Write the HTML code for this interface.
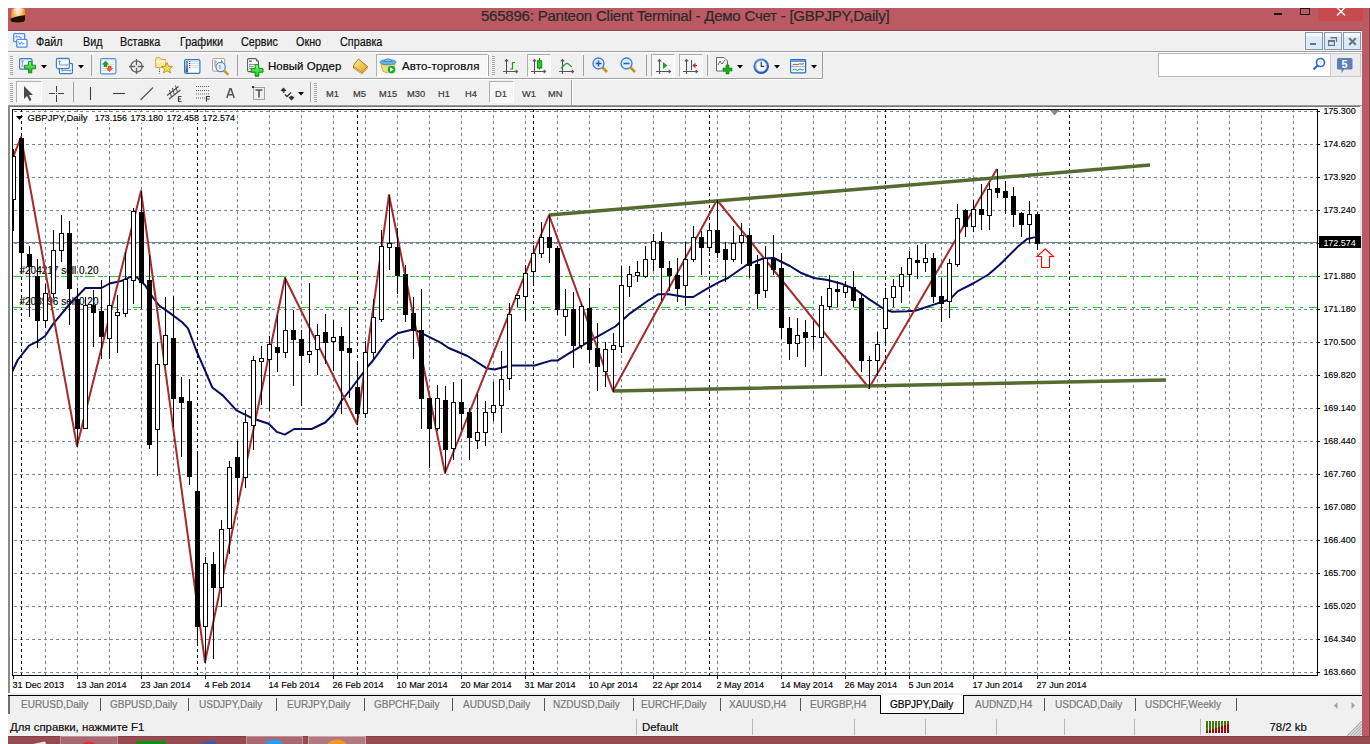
<!DOCTYPE html>
<html><head><meta charset="utf-8"><title>MT4</title>
<style>
html,body{margin:0;padding:0;width:1370px;height:744px;overflow:hidden;background:#fff;}
.a{position:absolute;}
.t{font-family:"Liberation Sans", sans-serif;white-space:nowrap;line-height:1;-webkit-text-stroke:0.2px currentColor;}
svg text{font-family:"Liberation Sans", sans-serif;}
</style></head><body>
<div class="a" style="left:8px;top:8px;width:1362px;height:22px;background:#bb5a63;"></div><div class="a" style="left:8px;top:30px;width:1354px;height:1px;background:#9c424c;"></div><div class="a" style="left:1362px;top:8px;width:8px;height:736px;background:#bb5a63;"></div><div class="a" style="left:1369px;top:8px;width:1px;height:736px;background:#8e3e48;"></div><div class="a" style="left:8px;top:736px;width:1362px;height:8px;background:#964a52;"></div><div class="a" style="left:8px;top:736px;width:1362px;height:1px;background:#8a4048;"></div><div class="a" style="left:1318px;top:8px;width:45px;height:13px;background:#c74a4e;"></div><svg class="a" style="left:10px;top:8px" width="17" height="16" viewBox="0 0 17 16">
<defs><linearGradient id="ai" x1="0" y1="0" x2="1" y2="0"><stop offset="0" stop-color="#f39020"/><stop offset="0.5" stop-color="#ffe0b8"/><stop offset="1" stop-color="#f39020"/></linearGradient><linearGradient id="ai2" x1="0" y1="0" x2="0" y2="1"><stop offset="0" stop-color="#fff" stop-opacity="0.85"/><stop offset="1" stop-color="#fff" stop-opacity="0"/></linearGradient></defs>
<path d="M1.5 3 Q1.5 0 5 0 L12 0 Q15 0 15 3 L15 11 Q15 15 8 15 Q1 15 1 12 Z" fill="url(#ai)"/>
<path d="M4 1 Q8.2 -0.5 12.5 1 L12 7 L4.5 8 Z" fill="url(#ai2)"/>
<path d="M5.5 1.5 L5.5 8 M8.2 1 L8.2 8 M11 1.5 L11 7.5" stroke="#f8b060" stroke-opacity="0.5" stroke-width="0.7"/>
<path d="M0.5 10.8 Q6 7.8 15 7.2 L15 11.5 Q15 14.8 8 14.8 Q0.5 14.8 0.5 12 Z" fill="#241005"/>
</svg><div class="a t" style="left:481px;top:8.3px;font-size:15px;color:#2a2a2a;letter-spacing:-0.22px;">565896: Panteon Client Terminal - Демо Счет - [GBPJPY,Daily]</div><div class="a" style="left:1274px;top:13px;width:8px;height:2px;background:#1a1a1a;"></div><div class="a" style="left:1300px;top:8px;width:8px;height:5px;border:1px solid #1a1a1a;border-top-width:1px"></div><svg class="a" style="left:1336px;top:7px" width="10" height="9"><path d="M1 0.5 L9 8.5 M9 0.5 L1 8.5" stroke="#fff" stroke-width="1.4"/></svg><div class="a" style="left:8px;top:31px;width:1354px;height:20px;background:#f0f0f0;"></div><div class="a" style="left:8px;top:31px;width:1354px;height:1px;background:#f5fafa;"></div><div class="a" style="left:8px;top:51px;width:1354px;height:1px;background:#a0a0a0;"></div><div class="a" style="left:8px;top:52px;width:1354px;height:1px;background:#ffffff;"></div><svg class="a" style="left:13px;top:33px" width="15" height="15" viewBox="0 0 15 15">
<rect x="0.7" y="0.7" width="11" height="8" rx="1" fill="#fff" stroke="#4a8af4" stroke-width="1.3"/>
<path d="M2.5 4.5 L3.5 3 L4.5 4.5 M5.5 3 L7 4.5 L8.5 5" stroke="#4a8af4" fill="none" stroke-width="1.1"/>
<rect x="3.7" y="6.3" width="10.3" height="7.9" rx="1" fill="#fff" stroke="#4a8af4" stroke-width="1.3"/>
<path d="M5.5 8.5 L7 11.5 L8.5 9 L9.8 11.5 L11.3 10" stroke="#4a8af4" fill="none" stroke-width="1"/>
</svg><div class="a t" style="left:36px;top:35.5px;font-size:12px;color:#111;transform:scaleX(0.9);transform-origin:0 0;">Файл</div><div class="a t" style="left:82.6px;top:35.5px;font-size:12px;color:#111;transform:scaleX(0.9);transform-origin:0 0;">Вид</div><div class="a t" style="left:120px;top:35.5px;font-size:12px;color:#111;transform:scaleX(0.9);transform-origin:0 0;">Вставка</div><div class="a t" style="left:180px;top:35.5px;font-size:12px;color:#111;transform:scaleX(0.9);transform-origin:0 0;">Графики</div><div class="a t" style="left:241.2px;top:35.5px;font-size:12px;color:#111;transform:scaleX(0.9);transform-origin:0 0;">Сервис</div><div class="a t" style="left:296px;top:35.5px;font-size:12px;color:#111;transform:scaleX(0.9);transform-origin:0 0;">Окно</div><div class="a t" style="left:339.8px;top:35.5px;font-size:12px;color:#111;transform:scaleX(0.9);transform-origin:0 0;">Справка</div><div class="a" style="left:1305px;top:32px;width:16px;height:16px;border:1px solid #8898a8;background:linear-gradient(#f2f8fe 0,#f2f8fe 3px,#dde9f6 4px,#dde9f6 100%)"></div><div class="a" style="left:1324px;top:32px;width:16px;height:16px;border:1px solid #8898a8;background:linear-gradient(#f2f8fe 0,#f2f8fe 3px,#dde9f6 4px,#dde9f6 100%)"></div><div class="a" style="left:1343px;top:32px;width:16px;height:16px;border:1px solid #8898a8;background:linear-gradient(#f2f8fe 0,#f2f8fe 3px,#dde9f6 4px,#dde9f6 100%)"></div><div class="a" style="left:1310px;top:43px;width:6px;height:2px;background:#667585"></div><svg class="a" style="left:1328px;top:37px" width="10" height="9"><path d="M2.5 0 L8.5 0 L8.5 5 M2.5 0.8 L8.5 0.8" stroke="#667585" stroke-width="1.2" fill="none"/><rect x="0.6" y="3.6" width="5.8" height="4.8" fill="#dde9f6" stroke="#667585" stroke-width="1.2"/><path d="M0.6 4.5 L6.4 4.5" stroke="#667585" stroke-width="1"/></svg><svg class="a" style="left:1348px;top:37px" width="9" height="9"><path d="M1.2 1.2 L7.8 7.8 M7.8 1.2 L1.2 7.8" stroke="#667585" stroke-width="2"/></svg><div class="a" style="left:8px;top:53px;width:1354px;height:52px;background:#f0f0f0;"></div><div class="a" style="left:8px;top:78px;width:815px;height:1px;background:#a0a0a0;"></div><div class="a" style="left:822px;top:52px;width:1px;height:26px;background:#a0a0a0;"></div><div class="a" style="left:8px;top:79px;width:815px;height:1px;background:#ffffff;"></div><div class="a" style="left:571px;top:80px;width:1px;height:25px;background:#a0a0a0;"></div><div class="a" style="left:572px;top:80px;width:1px;height:25px;background:#ffffff;"></div><div class="a" style="left:10px;top:56px;width:3px;height:1px;background:#a8a8a8;"></div><div class="a" style="left:10px;top:58px;width:3px;height:1px;background:#a8a8a8;"></div><div class="a" style="left:10px;top:60px;width:3px;height:1px;background:#a8a8a8;"></div><div class="a" style="left:10px;top:62px;width:3px;height:1px;background:#a8a8a8;"></div><div class="a" style="left:10px;top:64px;width:3px;height:1px;background:#a8a8a8;"></div><div class="a" style="left:10px;top:66px;width:3px;height:1px;background:#a8a8a8;"></div><div class="a" style="left:10px;top:68px;width:3px;height:1px;background:#a8a8a8;"></div><div class="a" style="left:10px;top:70px;width:3px;height:1px;background:#a8a8a8;"></div><div class="a" style="left:10px;top:72px;width:3px;height:1px;background:#a8a8a8;"></div><div class="a" style="left:10px;top:74px;width:3px;height:1px;background:#a8a8a8;"></div><div class="a" style="left:10px;top:83px;width:3px;height:1px;background:#a8a8a8;"></div><div class="a" style="left:10px;top:85px;width:3px;height:1px;background:#a8a8a8;"></div><div class="a" style="left:10px;top:87px;width:3px;height:1px;background:#a8a8a8;"></div><div class="a" style="left:10px;top:89px;width:3px;height:1px;background:#a8a8a8;"></div><div class="a" style="left:10px;top:91px;width:3px;height:1px;background:#a8a8a8;"></div><div class="a" style="left:10px;top:93px;width:3px;height:1px;background:#a8a8a8;"></div><div class="a" style="left:10px;top:95px;width:3px;height:1px;background:#a8a8a8;"></div><div class="a" style="left:10px;top:97px;width:3px;height:1px;background:#a8a8a8;"></div><div class="a" style="left:10px;top:99px;width:3px;height:1px;background:#a8a8a8;"></div><div class="a" style="left:10px;top:101px;width:3px;height:1px;background:#a8a8a8;"></div><div class="a" style="left:492px;top:56px;width:3px;height:1px;background:#a8a8a8;"></div><div class="a" style="left:492px;top:58px;width:3px;height:1px;background:#a8a8a8;"></div><div class="a" style="left:492px;top:60px;width:3px;height:1px;background:#a8a8a8;"></div><div class="a" style="left:492px;top:62px;width:3px;height:1px;background:#a8a8a8;"></div><div class="a" style="left:492px;top:64px;width:3px;height:1px;background:#a8a8a8;"></div><div class="a" style="left:492px;top:66px;width:3px;height:1px;background:#a8a8a8;"></div><div class="a" style="left:492px;top:68px;width:3px;height:1px;background:#a8a8a8;"></div><div class="a" style="left:492px;top:70px;width:3px;height:1px;background:#a8a8a8;"></div><div class="a" style="left:492px;top:72px;width:3px;height:1px;background:#a8a8a8;"></div><div class="a" style="left:492px;top:74px;width:3px;height:1px;background:#a8a8a8;"></div><div class="a" style="left:314px;top:83px;width:3px;height:1px;background:#a8a8a8;"></div><div class="a" style="left:314px;top:85px;width:3px;height:1px;background:#a8a8a8;"></div><div class="a" style="left:314px;top:87px;width:3px;height:1px;background:#a8a8a8;"></div><div class="a" style="left:314px;top:89px;width:3px;height:1px;background:#a8a8a8;"></div><div class="a" style="left:314px;top:91px;width:3px;height:1px;background:#a8a8a8;"></div><div class="a" style="left:314px;top:93px;width:3px;height:1px;background:#a8a8a8;"></div><div class="a" style="left:314px;top:95px;width:3px;height:1px;background:#a8a8a8;"></div><div class="a" style="left:314px;top:97px;width:3px;height:1px;background:#a8a8a8;"></div><div class="a" style="left:314px;top:99px;width:3px;height:1px;background:#a8a8a8;"></div><div class="a" style="left:314px;top:101px;width:3px;height:1px;background:#a8a8a8;"></div><div class="a" style="left:91px;top:55px;width:1px;height:21px;background:#a0a0a0;"></div><div class="a" style="left:237px;top:55px;width:1px;height:21px;background:#a0a0a0;"></div><div class="a" style="left:488px;top:55px;width:1px;height:21px;background:#a0a0a0;"></div><div class="a" style="left:583px;top:55px;width:1px;height:21px;background:#a0a0a0;"></div><div class="a" style="left:646px;top:55px;width:1px;height:21px;background:#a0a0a0;"></div><div class="a" style="left:707px;top:55px;width:1px;height:21px;background:#a0a0a0;"></div><div class="a" style="left:73px;top:82px;width:1px;height:20px;background:#a0a0a0;"></div><div class="a" style="left:310px;top:82px;width:1px;height:20px;background:#a0a0a0;"></div><svg class="a" style="left:41px;top:65px" width="6" height="4"><path d="M0 0 L6 0 L3 3.5 Z" fill="#000"/></svg><svg class="a" style="left:78px;top:65px" width="6" height="4"><path d="M0 0 L6 0 L3 3.5 Z" fill="#000"/></svg><svg class="a" style="left:737px;top:65px" width="6" height="4"><path d="M0 0 L6 0 L3 3.5 Z" fill="#000"/></svg><svg class="a" style="left:774px;top:65px" width="6" height="4"><path d="M0 0 L6 0 L3 3.5 Z" fill="#000"/></svg><svg class="a" style="left:811px;top:65px" width="6" height="4"><path d="M0 0 L6 0 L3 3.5 Z" fill="#000"/></svg><svg class="a" style="left:298px;top:92px" width="6" height="4"><path d="M0 0 L6 0 L3 3.5 Z" fill="#000"/></svg><div class="a" style="left:376px;top:54px;width:110px;height:21px;border:1px solid;border-color:#b0b0b0 #ffffff #ffffff #b0b0b0;background:#f7f7f7"></div><div class="a" style="left:527px;top:54px;width:22px;height:21px;border:1px solid;border-color:#b0b0b0 #ffffff #ffffff #b0b0b0;background:#f7f7f7"></div><div class="a" style="left:651px;top:54px;width:22px;height:21px;border:1px solid;border-color:#b0b0b0 #ffffff #ffffff #b0b0b0;background:#f7f7f7"></div><div class="a" style="left:679px;top:54px;width:22px;height:21px;border:1px solid;border-color:#b0b0b0 #ffffff #ffffff #b0b0b0;background:#f7f7f7"></div><div class="a" style="left:16px;top:81px;width:24px;height:20px;border:1px solid;border-color:#b0b0b0 #ffffff #ffffff #b0b0b0;background:#f7f7f7"></div><div class="a" style="left:489px;top:81px;width:23px;height:20px;border:1px solid;border-color:#b0b0b0 #ffffff #ffffff #b0b0b0;background:#f7f7f7"></div><svg class="a" style="left:18px;top:57px" width="19" height="17" viewBox="0 0 19 17"><defs><linearGradient id="wg" x1="0" y1="0" x2="0" y2="1"><stop offset="0" stop-color="#cfe2f8"/><stop offset="0.35" stop-color="#ffffff"/><stop offset="1" stop-color="#f2f6fb"/></linearGradient><linearGradient id="pg" x1="0" y1="0" x2="0" y2="1"><stop offset="0" stop-color="#8ef08e"/><stop offset="1" stop-color="#0cb40c"/></linearGradient></defs>
<rect x="1.6" y="1.6" width="12.4" height="10.6" rx="1.5" fill="url(#wg)" stroke="#3a7cc8" stroke-width="1.2"/>
<path d="M4.6 3.5 L4.6 10 M3.3 4.8 L4.6 3.5 L5.9 4.8 M3.3 8.7 L4.6 10 L5.9 8.7" stroke="#7f9fbd" fill="none" stroke-width="1"/>
<path d="M10.5 4.5 L13.8 4.5 L13.8 8.2 L17.6 8.2 L17.6 11.8 L13.8 11.8 L13.8 15.8 L10.5 15.8 L10.5 11.8 L6.6 11.8 L6.6 8.2 L10.5 8.2 Z" fill="url(#pg)" stroke="#0a8a0a" stroke-width="0.9"/></svg><svg class="a" style="left:55px;top:57px" width="19" height="18" viewBox="0 0 19 18"><rect x="4.4" y="6.3" width="13" height="10.4" rx="1.2" fill="#fafcff" stroke="#3a7cc8" stroke-width="1.2"/>
<path d="M6.5 13.5 L15.5 13.5 M7.5 12.3 L6.3 13.5 L7.5 14.7 M14.5 12.3 L15.7 13.5 L14.5 14.7" stroke="#7f9fbd" fill="none" stroke-width="1"/>
<rect x="1.4" y="1.4" width="13" height="10.2" rx="1.5" fill="url(#wg)" stroke="#3a7cc8" stroke-width="1.2"/>
<path d="M4.5 3.5 L4.5 8 M3.3 4.7 L4.5 3.5 L5.7 4.7 M4.5 8 L12.5 8 M11.3 6.8 L12.5 8 L11.3 9.2" stroke="#7f9fbd" fill="none" stroke-width="1"/></svg><svg class="a" style="left:100px;top:58px" width="17" height="17" viewBox="0 0 17 17"><rect x="0.6" y="0.6" width="15.3" height="15.3" rx="1.5" fill="#fff" stroke="#4a90dc" stroke-width="1.2"/><rect x="1.2" y="1.2" width="14.1" height="1.2" fill="#bcd8f4"/>
<path d="M3 8.5 L6 8.5 M3 10.5 L6 10.5 M3 12.5 L9 12.5 M10 4.5 L14 4.5 M10 6.5 L14 6.5 M12 12.5 L14 12.5" stroke="#d0d0d0" stroke-width="0.8"/>
<path d="M5.5 3 L8.6 6.3 L7 6.3 L7 8.8 L4 8.8 L4 6.3 L2.4 6.3 Z" fill="#1aa81a" stroke="#0a7a0a" stroke-width="0.5"/><path d="M9.6 13.8 L12.8 10.5 L11.2 10.5 L11.2 8 L8.1 8 L8.1 10.5 L6.4 10.5 Z" fill="#f06030" stroke="#c03a10" stroke-width="0.5"/></svg><svg class="a" style="left:129px;top:59px" width="15" height="15" viewBox="0 0 15 15"><circle cx="7.5" cy="7.5" r="5.6" fill="none" stroke="#606060" stroke-width="1.3"/><path d="M7.5 0 L7.5 6.3 M7.5 8.7 L7.5 15 M0 7.5 L6.3 7.5 M8.7 7.5 L15 7.5" stroke="#606060" stroke-width="1.3"/></svg><svg class="a" style="left:155px;top:57px" width="18" height="18" viewBox="0 0 18 18"><path d="M0.7 2 Q0.7 0.7 2 0.7 L5 0.7 L6.5 2.5 L10.5 2.5 L10.5 10.5 L0.7 10.5 Z" fill="#f8e7a0" stroke="#c8a038" stroke-width="0.9"/><path d="M1 4.5 L10.5 4.5" stroke="#fff8d8" stroke-width="2"/><path d="M4.5 11.5 L4.5 12.5 M4.5 14 L4.5 15 M4.5 16.5 L4.5 17" stroke="#333" stroke-width="0.9"/>
<path d="M12 5.5 L13.6 9.3 L17.6 9.5 L14.5 12 L15.6 16 L12 13.8 L8.4 16 L9.5 12 L6.4 9.5 L10.4 9.3 Z" fill="#f6dc50" stroke="#b8901e" stroke-width="0.9"/></svg><svg class="a" style="left:184px;top:59px" width="17" height="15" viewBox="0 0 17 15"><defs><linearGradient id="tg" x1="0" y1="0" x2="0" y2="1"><stop offset="0" stop-color="#9cc8f0"/><stop offset="1" stop-color="#3a4a5a"/></linearGradient></defs><rect x="0.6" y="0.6" width="15.3" height="13.8" rx="1.5" fill="#fff" stroke="#2f74c4" stroke-width="1.2"/><rect x="1.5" y="1.5" width="2.6" height="12" fill="url(#tg)"/><path d="M6 2.5 L15 2.5 M6 4.5 L15 4.5 M6 6.5 L15 6.5 M6 8.5 L15 8.5" stroke="#c8d8f4" stroke-width="0.9"/><path d="M5.2 2.5 L6.2 2.5 M5.2 8.5 L6.2 8.5" stroke="#e02020" stroke-width="1.2"/><path d="M5.2 4.5 L6.2 4.5 M5.2 6.5 L6.2 6.5" stroke="#203020" stroke-width="1.2"/><path d="M2.8 2.5 L2.8 3.3" stroke="#000" stroke-width="1.2"/></svg><svg class="a" style="left:212px;top:58px" width="18" height="18" viewBox="0 0 18 18"><rect x="0.6" y="0.6" width="12.2" height="12.6" rx="1" fill="#fafafa" stroke="#a89f8a" stroke-width="1"/><path d="M3 2 L3 9 M3 4 L5 4 M9.5 2 L9.5 7 M9.5 3 L11 4" stroke="#8a8a8a" stroke-width="0.9"/><circle cx="8.6" cy="9" r="4.6" fill="#e4f2fc" fill-opacity="0.9" stroke="#5a8ad8" stroke-width="1.2"/><path d="M8 7 L8 11" stroke="#9ab0c4" stroke-width="1.6"/><path d="M11.8 12.5 L16.3 16.8" stroke="#c8a020" stroke-width="2.6"/></svg><svg class="a" style="left:246px;top:57px" width="18" height="20" viewBox="0 0 18 20"><path d="M2.5 1.6 L9.6 1.6 L12.4 4.4 L12.4 13 Q12.4 14.6 11 14.6 L2.9 14.6 Q1.6 14.6 1.6 13.2 L1.6 2.6 Q1.6 1.6 2.5 1.6 Z" fill="#fff" stroke="#5a5a5a" stroke-width="1.1"/><path d="M10.4 2.5 L10.4 4 L11.8 4" stroke="#5a5a5a" fill="none" stroke-width="1"/><rect x="3" y="3.4" width="2.8" height="1.6" fill="#777"/><path d="M3 7.4 L9 7.4 M3 9.4 L7.5 9.4 M3 11.4 L6 11.4" stroke="#777" stroke-width="0.9"/>
<defs><linearGradient id="pg2" x1="0" y1="0" x2="0" y2="1"><stop offset="0" stop-color="#90f890"/><stop offset="1" stop-color="#00d000"/></linearGradient></defs><path d="M9.2 7.6 L12.8 7.6 L12.8 11.6 L17 11.6 L17 15.2 L12.8 15.2 L12.8 19.2 L9.2 19.2 L9.2 15.2 L5.2 15.2 L5.2 11.6 L9.2 11.6 Z" fill="url(#pg2)" stroke="#0a8a0a" stroke-width="1"/></svg><svg class="a" style="left:352px;top:58px" width="17" height="17" viewBox="0 0 17 17"><defs><linearGradient id="bk" x1="0" y1="0" x2="1" y2="1"><stop offset="0" stop-color="#fff0a0"/><stop offset="1" stop-color="#d8a020"/></linearGradient></defs><path d="M1 8 L6.5 1 L15.5 8.5 L15.5 10.5 L10 16.5 L1 10 Z" fill="#a87010"/><path d="M1 8 L6.5 1 L15.5 8.5 L10 15 Z" fill="url(#bk)" stroke="#a07018" stroke-width="0.8"/><path d="M2 9.5 L10 15.8 L15 10" stroke="#f8e8b0" fill="none" stroke-width="0.8"/></svg><svg class="a" style="left:379px;top:57px" width="18" height="18" viewBox="0 0 18 18"><path d="M2 7 L16 7 L14.5 14 Q9 17.5 3.5 14 Z" fill="#f4d868" stroke="#c8a040" stroke-width="0.8"/><ellipse cx="9" cy="5.2" rx="8" ry="2.6" fill="#6ab4e8" stroke="#3a80b8" stroke-width="0.8"/><path d="M4.5 4.5 Q9 -1 13.5 4.5 Z" fill="#80c4f0" stroke="#3a80b8" stroke-width="0.8"/><circle cx="12.5" cy="12.5" r="4.3" fill="#18a818" stroke="#e8f8e8" stroke-width="0.8"/><path d="M11.2 10.2 L15 12.5 L11.2 14.8 Z" fill="#fff"/></svg><svg class="a" style="left:502px;top:58px" width="17" height="17" viewBox="0 0 17 17"><path d="M4.5 1.5 L4.5 16 M1 13.5 L15.5 13.5 M2.8 3.3 L4.5 1.5 L6.2 3.3 M13.7 11.8 L15.5 13.5 L13.7 15.2" stroke="#555" fill="none" stroke-width="1.1"/><path d="M10.5 4 L10.5 11.5 M10.5 4.5 L13 4.5 M8 11 L10.5 11" stroke="#18a018" fill="none" stroke-width="1.2"/></svg><svg class="a" style="left:530px;top:58px" width="17" height="17" viewBox="0 0 17 17"><path d="M4.5 1.5 L4.5 16 M1 13.5 L15.5 13.5 M2.8 3.3 L4.5 1.5 L6.2 3.3 M13.7 11.8 L15.5 13.5 L13.7 15.2" stroke="#555" fill="none" stroke-width="1.1"/><path d="M9.5 0 L9.5 11.5" stroke="#0a6a0a" stroke-width="1"/><rect x="7.5" y="2.8" width="4.2" height="7.2" fill="#20d020" stroke="#0a7a0a" stroke-width="0.9"/></svg><svg class="a" style="left:558px;top:58px" width="17" height="17" viewBox="0 0 17 17"><path d="M4.5 1.5 L4.5 16 M1 13.5 L15.5 13.5 M2.8 3.3 L4.5 1.5 L6.2 3.3 M13.7 11.8 L15.5 13.5 L13.7 15.2" stroke="#555" fill="none" stroke-width="1.1"/><path d="M3 10.5 Q5 8 7.5 6 Q9 4.5 11 6.5 L14 9" stroke="#20a020" fill="none" stroke-width="1.1"/></svg><svg class="a" style="left:592px;top:57px" width="16" height="16" viewBox="0 0 16 16"><circle cx="6.5" cy="6.5" r="5.5" fill="#dbeefd" stroke="#3a7ad0" stroke-width="1.3"/><path d="M3.5 6.5 L9.5 6.5 M6.5 3.5 L6.5 9.5" stroke="#2a5ab0" stroke-width="1.5"/><path d="M10.5 10.5 L15 15" stroke="#c89020" stroke-width="2.6"/></svg><svg class="a" style="left:620px;top:57px" width="16" height="16" viewBox="0 0 16 16"><circle cx="6.5" cy="6.5" r="5.5" fill="#dbeefd" stroke="#3a7ad0" stroke-width="1.3"/><path d="M3.5 6.5 L9.5 6.5" stroke="#2a5ab0" stroke-width="1.5"/><path d="M10.5 10.5 L15 15" stroke="#c89020" stroke-width="2.6"/></svg><svg class="a" style="left:655px;top:58px" width="17" height="17" viewBox="0 0 17 17"><path d="M4.5 1.5 L4.5 16 M1 13.5 L15.5 13.5 M2.8 3.3 L4.5 1.5 L6.2 3.3 M13.7 11.8 L15.5 13.5 L13.7 15.2" stroke="#555" fill="none" stroke-width="1.1"/><path d="M8 4 L12.5 7.5 L8 11 Z" fill="#18a818"/></svg><svg class="a" style="left:682px;top:58px" width="17" height="17" viewBox="0 0 17 17"><path d="M4.5 1.5 L4.5 16 M1 13.5 L15.5 13.5 M2.8 3.3 L4.5 1.5 L6.2 3.3 M13.7 11.8 L15.5 13.5 L13.7 15.2" stroke="#555" fill="none" stroke-width="1.1"/><path d="M9.5 2 L9.5 12" stroke="#3050c0" stroke-width="1.1"/><path d="M11 7.5 L15 7.5 M11 7.5 L13 5.5 L13 9.5 Z" stroke="#d02020" fill="#d02020" stroke-width="1"/></svg><svg class="a" style="left:716px;top:57px" width="17" height="18" viewBox="0 0 17 18"><path d="M0.5 0.5 L8 0.5 L11.5 4 L11.5 14 L0.5 14 Z" fill="#fafafa" stroke="#6a6a6a"/><path d="M2 8 L4 4 L6 7 L9 3" stroke="#6a6a6a" fill="none"/><path d="M10 8 L13 8 L13 11 L16 11 L16 14 L13 14 L13 17 L10 17 L10 14 L7 14 L7 11 L10 11 Z" fill="#18b018" stroke="#0a7a0a" stroke-width="0.6"/></svg><svg class="a" style="left:753px;top:58px" width="17" height="17" viewBox="0 0 17 17"><defs><radialGradient id="cg" cx="0.4" cy="0.35" r="0.7"><stop offset="0" stop-color="#7ab8f8"/><stop offset="1" stop-color="#0a48a8"/></radialGradient></defs><circle cx="8.2" cy="8.2" r="7.8" fill="url(#cg)"/><circle cx="8.2" cy="8.2" r="5.4" fill="#fafafa" stroke="#c8d8e8" stroke-width="0.6"/><path d="M8.2 4 L8.2 8.4 L11 8.4" stroke="#333" fill="none" stroke-width="1.1"/><path d="M8.2 3.2 L8.2 3.9 M8.2 12.5 L8.2 13.2 M3.2 8.2 L3.9 8.2 M12.5 8.2 L13.2 8.2" stroke="#666" stroke-width="0.8"/></svg><svg class="a" style="left:790px;top:59px" width="17" height="15" viewBox="0 0 17 15"><rect x="0.6" y="0.6" width="15" height="13.2" rx="0.8" fill="#f8fbff" stroke="#2a6ac8" stroke-width="1.2"/><rect x="1.2" y="1.2" width="13.8" height="1.8" fill="#5a98e0"/><path d="M1.2 7.6 L15 7.6" stroke="#7aa6dc" stroke-width="0.9"/><path d="M2.5 6 L5 5.2 L7 5.8 L9.5 4.8 L12 5.2 L14 4.5" stroke="#b03020" fill="none" stroke-width="0.9"/><path d="M2.5 11 L5 10 L7.5 11.5 L10 10 L12.5 11 L14 10" stroke="#18a018" fill="none" stroke-width="0.9"/></svg><svg class="a" style="left:23px;top:86px" width="11" height="16" viewBox="0 0 11 16"><path d="M1 0 L1 13 L4 10 L6.5 15 L8.5 14 L6 9 L10 9 Z" fill="#4a4a4a"/></svg><svg class="a" style="left:48px;top:86px" width="17" height="16" viewBox="0 0 17 16"><path d="M8.5 0 L8.5 6 M8.5 9 L8.5 16 M1 7.5 L7 7.5 M10 7.5 L16 7.5 M8.5 7 L8.5 8" stroke="#404040" stroke-width="1"/></svg><svg class="a" style="left:89px;top:87px" width="3" height="14" viewBox="0 0 3 14"><path d="M1.5 0 L1.5 13" stroke="#404040" stroke-width="1.1"/></svg><svg class="a" style="left:112px;top:92px" width="14" height="3" viewBox="0 0 14 3"><path d="M1 1.5 L13 1.5" stroke="#404040" stroke-width="1.1"/></svg><svg class="a" style="left:140px;top:87px" width="14" height="14" viewBox="0 0 14 14"><path d="M0.5 13 L13 0.5" stroke="#555" stroke-width="1.3"/></svg><svg class="a" style="left:166px;top:85px" width="17" height="18" viewBox="0 0 17 18"><path d="M1 10.5 L12.5 1.5 M3 14 L14.5 5" stroke="#505050" stroke-width="1.2"/><path d="M3.5 5 L5.5 12 M6.5 3 L8.5 10 M9.5 0.5 L11.5 7.5" stroke="#505050" stroke-width="1"/><path d="M12 11.5 L15.5 11.5 M12 14 L15 14 M12 16.5 L15.5 16.5 M12.5 11.5 L12.5 16.5" stroke="#404040" stroke-width="1.2"/></svg><svg class="a" style="left:196px;top:85px" width="17" height="17" viewBox="0 0 17 17"><path d="M0 1.5 L13 1.5 M0 5.5 L13 5.5 M0 9 L13 9 M0 13 L9 13" stroke="#606060" stroke-width="1" stroke-dasharray="1 1"/><path d="M10.5 16.5 L10.5 11.5 L14 11.5 M10.5 14 L13.5 14" stroke="#404040" stroke-width="1.2" fill="none"/></svg><svg class="a" style="left:226px;top:88px" width="9" height="11" viewBox="0 0 9 11"><path d="M0.8 10 L4 0.8 L5 0.8 L8.2 10 M2 6.8 L7 6.8" stroke="#585858" stroke-width="1.6" fill="none"/></svg><svg class="a" style="left:252px;top:86px" width="14" height="15" viewBox="0 0 14 15"><rect x="1.5" y="1.5" width="11" height="12" fill="none" stroke="#555" stroke-width="1" stroke-dasharray="1 1"/><rect x="0" y="0" width="2" height="2" fill="#333"/><path d="M3.5 4 L10.5 4 M7 4 L7 11.5" stroke="#555" stroke-width="1.6"/></svg><svg class="a" style="left:280px;top:87px" width="15" height="14" viewBox="0 0 15 14"><path d="M0.5 3.5 L3.5 0.5 L6.5 3.5 L3.5 5 Z M8.5 10.5 L11.5 8.5 L14.5 10.5 L11.5 13.5 Z" fill="#333"/><path d="M3.5 5 L4 6 M5 7.5 L7 9.5 L11 5.5" stroke="#333" stroke-width="1.3" fill="none"/></svg><div class="a t" style="left:268px;top:61.3px;font-size:11.5px;color:#0a0a0a;">Новый Ордер</div><div class="a t" style="left:402px;top:61.3px;font-size:11.5px;color:#0a0a0a;letter-spacing:0.12px;">Авто-торговля</div><div class="a t" style="left:326px;top:89.6px;font-size:9.3px;color:#3a3a3a;">M1</div><div class="a t" style="left:353px;top:89.6px;font-size:9.3px;color:#3a3a3a;">M5</div><div class="a t" style="left:379px;top:89.6px;font-size:9.3px;color:#3a3a3a;">M15</div><div class="a t" style="left:407px;top:89.6px;font-size:9.3px;color:#3a3a3a;">M30</div><div class="a t" style="left:438px;top:89.6px;font-size:9.3px;color:#3a3a3a;">H1</div><div class="a t" style="left:465px;top:89.6px;font-size:9.3px;color:#3a3a3a;">H4</div><div class="a t" style="left:495px;top:89.6px;font-size:9.3px;color:#3a3a3a;">D1</div><div class="a t" style="left:522px;top:89.6px;font-size:9.3px;color:#3a3a3a;">W1</div><div class="a t" style="left:548px;top:89.6px;font-size:9.3px;color:#3a3a3a;">MN</div><div class="a" style="left:1158px;top:53px;width:173px;height:24px;border:1px solid #b8b8b8;background:#fff;box-sizing:border-box"></div><svg class="a" style="left:1312px;top:57px" width="14" height="14"><circle cx="8.5" cy="5.5" r="4" fill="none" stroke="#2a6ad0" stroke-width="1.6"/><path d="M6 8 L1.5 12.5" stroke="#2a6ad0" stroke-width="2.2"/></svg><div class="a" style="left:1330px;top:53px;width:31px;height:24px;border:1px solid #c8c8c8;background:#ececec;box-sizing:border-box"></div><svg class="a" style="left:1336px;top:57px" width="18" height="17"><path d="M2.5 1 L15 1 Q16.5 1 16.5 2.5 L16.5 11 Q16.5 12.5 15 12.5 L8 12.5 L5.5 16 L5.5 12.5 L2.5 12.5 Q1 12.5 1 11 L1 2.5 Q1 1 2.5 1 Z" fill="#5f7fb4"/><text x="5.5" y="11" font-size="11" font-family="Liberation Sans" font-weight="bold" fill="#fff">5</text></svg><div class="a" style="left:8px;top:105px;width:1354px;height:1px;background:#a0a0a0;"></div><div class="a" style="left:8px;top:106px;width:1354px;height:1px;background:#707070;"></div><div class="a" style="left:8px;top:106px;width:2px;height:589px;background:#8a8a8a;"></div><div class="a" style="left:10px;top:107px;width:1350px;height:586px;background:#ffffff;"></div><div class="a" style="left:1360px;top:106px;width:2px;height:587px;background:#e3e3e3;"></div><div class="a" style="left:8px;top:693px;width:1354px;height:2px;background:#f0f0f0;"></div><svg class="a" style="left:0px;top:0px" width="1370" height="744" viewBox="0 0 1370 744" shape-rendering="crispEdges"><defs><clipPath id="cp"><rect x="13" y="110" width="1304" height="565"/></clipPath></defs><path d="M13 111.5H1317M13 144.5H1317M13 177.5H1317M13 210.5H1317M13 243.5H1317M13 276.5H1317M13 309.5H1317M13 342.5H1317M13 375.5H1317M13 408.5H1317M13 441.5H1317M13 474.5H1317M13 507.5H1317M13 540.5H1317M13 573.5H1317M13 606.5H1317M13 639.5H1317M13 672.5H1317" stroke="#778899" stroke-width="1" stroke-dasharray="3 3" stroke-dashoffset="5"/><path d="M45.5 110V675M77.5 110V675M109.5 110V675M141.5 110V675M173.5 110V675M205.5 110V675M237.5 110V675M269.5 110V675M301.5 110V675M333.5 110V675M365.5 110V675M397.5 110V675M429.5 110V675M461.5 110V675M493.5 110V675M525.5 110V675M557.5 110V675M589.5 110V675M621.5 110V675M653.5 110V675M685.5 110V675M717.5 110V675M749.5 110V675M781.5 110V675M813.5 110V675M845.5 110V675M877.5 110V675M909.5 110V675M941.5 110V675M973.5 110V675M1005.5 110V675M1037.5 110V675M1069.5 110V675M1101.5 110V675M1133.5 110V675M1165.5 110V675M1197.5 110V675M1229.5 110V675M1261.5 110V675M1293.5 110V675" stroke="#778899" stroke-width="1" stroke-dasharray="3 3" stroke-dashoffset="1"/><path d="M21.5 110V675M197.5 110V675M357.5 110V675M533.5 110V675M709.5 110V675M885.5 110V675M1069.5 110V675" stroke="#000" stroke-width="1" stroke-dasharray="3 3" stroke-dashoffset="1"/><path d="M13 242.5H1317" stroke="#778899" stroke-width="1"/><path d="M13 276.5H1317 M13 307.5H1317" stroke="#22cc22" stroke-width="1" stroke-dasharray="9 6 3 6" stroke-dashoffset="0"/><text x="19.5" y="274" font-size="10" font-family="Liberation Sans" fill="#000" stroke="#000" stroke-width="0.15" shape-rendering="auto">#204217 sell 0.20</text><text x="19.5" y="304.5" font-size="10" font-family="Liberation Sans" fill="#000" stroke="#000" stroke-width="0.15" shape-rendering="auto">#203996 sell 0.20</text><path d="M16 116 L23 116 L19.5 120 Z" fill="#000" shape-rendering="auto"/><rect x="26" y="112" width="210" height="11" fill="#fff"/><text x="27.6" y="121" font-size="9.3" textLength="60" lengthAdjust="spacingAndGlyphs" font-family="Liberation Sans" fill="#000" stroke="#000" stroke-width="0.15" shape-rendering="auto">GBPJPY,Daily</text><text x="94.7" y="121" font-size="9.3" textLength="32.4" lengthAdjust="spacingAndGlyphs" font-family="Liberation Sans" fill="#000" stroke="#000" stroke-width="0.15" shape-rendering="auto">173.156</text><text x="130.6" y="121" font-size="9.3" textLength="32.4" lengthAdjust="spacingAndGlyphs" font-family="Liberation Sans" fill="#000" stroke="#000" stroke-width="0.15" shape-rendering="auto">173.180</text><text x="166.5" y="121" font-size="9.3" textLength="32.4" lengthAdjust="spacingAndGlyphs" font-family="Liberation Sans" fill="#000" stroke="#000" stroke-width="0.15" shape-rendering="auto">172.458</text><text x="202.5" y="121" font-size="9.3" textLength="32.4" lengthAdjust="spacingAndGlyphs" font-family="Liberation Sans" fill="#000" stroke="#000" stroke-width="0.15" shape-rendering="auto">172.574</text><path d="M1049.8 110 L1059.4 110 L1054.6 115.3 Z" fill="#778899" shape-rendering="auto"/><g clip-path="url(#cp)"><polyline points="12.0,372.0 17.7,360.0 29.0,345.6 37.0,341.6 45.1,336.0 53.2,323.9 69.3,304.5 85.4,288.0 101.5,288.0 109.6,283.5 120.9,281.1 130.6,276.8 137.0,277.4 145.1,285.2 153.2,298.0 159.6,306.0 169.3,312.6 182.2,322.3 188.0,328.4 196.1,350.0 204.2,368.7 212.3,387.5 223.0,395.6 236.5,410.4 252.6,418.4 268.7,423.8 276.8,431.9 284.8,434.6 294.2,429.0 311.7,429.0 325.2,422.5 334.6,413.0 341.3,401.0 352.0,387.5 368.2,366.0 373.4,360.0 386.9,341.3 397.6,333.2 413.8,329.2 424.5,334.6 440.6,342.6 448.7,348.0 467.5,356.0 486.3,368.2 494.4,369.5 510.5,365.5 534.7,365.5 550.9,360.6 557.5,360.6 566.9,354.7 593.8,338.6 615.3,326.5 628.7,314.4 647.5,301.0 658.3,294.2 669.0,294.2 685.2,297.0 693.2,297.0 706.7,288.9 720.0,281.6 728.0,278.0 746.9,264.7 763.0,258.5 773.8,258.0 789.9,266.0 800.6,272.7 814.0,278.0 827.5,280.0 841.0,283.5 854.4,288.9 867.8,298.3 884.0,309.0 892.0,311.7 906.9,311.3 915.0,310.8 933.8,304.6 949.9,299.2 958.0,291.1 974.0,283.0 988.4,274.5 999.7,264.8 1007.7,256.8 1017.4,247.1 1027.1,239.0 1035.2,237.1 1037.0,236.6" fill="none" stroke="#0a0a60" stroke-width="2" shape-rendering="auto" stroke-linejoin="round"/><polyline points="12,160 21,137 77,446 141,191 205,662 285,278 357,424 389,195 445,473 549,215 613,391 717,200 869,388 997,169" fill="none" stroke="#a52a2a" stroke-width="2" shape-rendering="auto" stroke-linejoin="round"/><path d="M549 215 L1150 165 M613 391 L1166 380" stroke="#556b2f" stroke-width="3.5" fill="none" shape-rendering="auto"/><path d="M13.5 149V231M21.5 137V271M29.5 246V317M37.5 259V348M45.5 284V328M53.5 230V298M61.5 215V262M69.5 221V325M77.5 288V447M85.5 297V429M93.5 290V347M101.5 280V359M109.5 276V359M117.5 295V353M125.5 252V317M133.5 208V304M141.5 191V309M149.5 255V449M157.5 342V476M165.5 297V366M173.5 296V427M181.5 377V457M189.5 379V485M197.5 452V646M205.5 557V663M213.5 552V659M221.5 520V607M229.5 461V554M237.5 441V502M245.5 410V488M253.5 356V450M261.5 346V405M269.5 336V411M277.5 315V372M285.5 278V358M293.5 310V386M301.5 330V406M309.5 283V363M317.5 324V375M325.5 314V364M333.5 320V371M341.5 327V414M349.5 307V398M357.5 361V425M365.5 341V418M373.5 299V359M381.5 230V322M389.5 195V270M397.5 228V294M405.5 265V322M413.5 297V359M421.5 289V429M429.5 398V468M437.5 385V431M445.5 386V473M453.5 382V460M461.5 379V430M469.5 408V460M477.5 394V449M485.5 401V446M493.5 382V421M501.5 351V433M509.5 303V390M517.5 295V307M525.5 265V321M533.5 245V286M541.5 222V258M549.5 215V263M557.5 246V315M565.5 289V336M573.5 292V368M581.5 304V349M589.5 288V363M597.5 323V391M605.5 342V387M613.5 333V392M621.5 266V353M629.5 266V297M637.5 261V282M645.5 246V278M653.5 234V271M661.5 232V301M669.5 261V291M677.5 258V302M685.5 242V306M693.5 226V262M701.5 231V275M709.5 223V252M717.5 200V258M725.5 242V282M733.5 226V262M741.5 223V264M749.5 228V278M757.5 255V309M765.5 246V298M773.5 235V275M781.5 253V339M789.5 317V360M797.5 318V357M805.5 320V367M813.5 321V349M811 336.5h5M821.5 296V376M829.5 275V310M837.5 281V307M845.5 281V298M853.5 271V307M861.5 294V372M869.5 356V389M867 360.5h5M877.5 332V376M885.5 288V346M893.5 279V307M901.5 267V303M909.5 251V291M917.5 245V279M925.5 244V272M933.5 253V303M941.5 278V322M949.5 259V318M957.5 204V267M965.5 209V237M973.5 200V232M981.5 184V230M989.5 183V230M997.5 169V198M1005.5 181V214M1013.5 187V227M1021.5 212V237M1029.5 201V243M1037.5 212V250" stroke="#000" stroke-width="1" fill="none"/><rect x="11.5" y="156.5" width="4" height="43" fill="#fff" stroke="#000" stroke-width="1"/><rect x="43.5" y="293.5" width="4" height="27" fill="#fff" stroke="#000" stroke-width="1"/><rect x="51.5" y="250.5" width="4" height="43" fill="#fff" stroke="#000" stroke-width="1"/><rect x="59.5" y="233.5" width="4" height="17" fill="#fff" stroke="#000" stroke-width="1"/><rect x="83.5" y="305.5" width="4" height="123" fill="#fff" stroke="#000" stroke-width="1"/><rect x="107.5" y="305.5" width="4" height="33" fill="#fff" stroke="#000" stroke-width="1"/><rect x="115.5" y="312.5" width="4" height="3" fill="#fff" stroke="#000" stroke-width="1"/><rect x="123.5" y="279.5" width="4" height="34" fill="#fff" stroke="#000" stroke-width="1"/><rect x="131.5" y="211.5" width="4" height="69" fill="#fff" stroke="#000" stroke-width="1"/><rect x="155.5" y="364.5" width="4" height="65" fill="#fff" stroke="#000" stroke-width="1"/><rect x="163.5" y="335.5" width="4" height="29" fill="#fff" stroke="#000" stroke-width="1"/><rect x="203.5" y="563.5" width="4" height="63" fill="#fff" stroke="#000" stroke-width="1"/><rect x="219.5" y="529.5" width="4" height="58" fill="#fff" stroke="#000" stroke-width="1"/><rect x="227.5" y="467.5" width="4" height="61" fill="#fff" stroke="#000" stroke-width="1"/><rect x="243.5" y="422.5" width="4" height="55" fill="#fff" stroke="#000" stroke-width="1"/><rect x="251.5" y="360.5" width="4" height="65" fill="#fff" stroke="#000" stroke-width="1"/><rect x="259.5" y="358.5" width="4" height="3" fill="#fff" stroke="#000" stroke-width="1"/><rect x="267.5" y="344.5" width="4" height="15" fill="#fff" stroke="#000" stroke-width="1"/><rect x="283.5" y="330.5" width="4" height="22" fill="#fff" stroke="#000" stroke-width="1"/><rect x="307.5" y="351.5" width="4" height="3" fill="#fff" stroke="#000" stroke-width="1"/><rect x="315.5" y="335.5" width="4" height="14" fill="#fff" stroke="#000" stroke-width="1"/><rect x="331.5" y="337.5" width="4" height="4" fill="#fff" stroke="#000" stroke-width="1"/><rect x="363.5" y="352.5" width="4" height="61" fill="#fff" stroke="#000" stroke-width="1"/><rect x="371.5" y="317.5" width="4" height="35" fill="#fff" stroke="#000" stroke-width="1"/><rect x="379.5" y="246.5" width="4" height="73" fill="#fff" stroke="#000" stroke-width="1"/><rect x="387.5" y="243.5" width="4" height="4" fill="#fff" stroke="#000" stroke-width="1"/><rect x="435.5" y="398.5" width="4" height="30" fill="#fff" stroke="#000" stroke-width="1"/><rect x="451.5" y="402.5" width="4" height="46" fill="#fff" stroke="#000" stroke-width="1"/><rect x="475.5" y="432.5" width="4" height="8" fill="#fff" stroke="#000" stroke-width="1"/><rect x="483.5" y="412.5" width="4" height="20" fill="#fff" stroke="#000" stroke-width="1"/><rect x="491.5" y="405.5" width="4" height="7" fill="#fff" stroke="#000" stroke-width="1"/><rect x="499.5" y="379.5" width="4" height="26" fill="#fff" stroke="#000" stroke-width="1"/><rect x="507.5" y="314.5" width="4" height="64" fill="#fff" stroke="#000" stroke-width="1"/><rect x="515.5" y="295.5" width="4" height="3" fill="#fff" stroke="#000" stroke-width="1"/><rect x="523.5" y="273.5" width="4" height="23" fill="#fff" stroke="#000" stroke-width="1"/><rect x="531.5" y="253.5" width="4" height="18" fill="#fff" stroke="#000" stroke-width="1"/><rect x="539.5" y="237.5" width="4" height="16" fill="#fff" stroke="#000" stroke-width="1"/><rect x="563.5" y="309.5" width="4" height="7" fill="#fff" stroke="#000" stroke-width="1"/><rect x="579.5" y="306.5" width="4" height="39" fill="#fff" stroke="#000" stroke-width="1"/><rect x="603.5" y="349.5" width="4" height="22" fill="#fff" stroke="#000" stroke-width="1"/><rect x="611.5" y="345.5" width="4" height="4" fill="#fff" stroke="#000" stroke-width="1"/><rect x="619.5" y="285.5" width="4" height="61" fill="#fff" stroke="#000" stroke-width="1"/><rect x="627.5" y="274.5" width="4" height="12" fill="#fff" stroke="#000" stroke-width="1"/><rect x="635.5" y="272.5" width="4" height="3" fill="#fff" stroke="#000" stroke-width="1"/><rect x="643.5" y="259.5" width="4" height="17" fill="#fff" stroke="#000" stroke-width="1"/><rect x="651.5" y="241.5" width="4" height="18" fill="#fff" stroke="#000" stroke-width="1"/><rect x="683.5" y="259.5" width="4" height="26" fill="#fff" stroke="#000" stroke-width="1"/><rect x="691.5" y="237.5" width="4" height="22" fill="#fff" stroke="#000" stroke-width="1"/><rect x="707.5" y="230.5" width="4" height="17" fill="#fff" stroke="#000" stroke-width="1"/><rect x="731.5" y="243.5" width="4" height="16" fill="#fff" stroke="#000" stroke-width="1"/><rect x="739.5" y="235.5" width="4" height="7" fill="#fff" stroke="#000" stroke-width="1"/><rect x="763.5" y="258.5" width="4" height="32" fill="#fff" stroke="#000" stroke-width="1"/><rect x="795.5" y="335.5" width="4" height="8" fill="#fff" stroke="#000" stroke-width="1"/><rect x="819.5" y="305.5" width="4" height="32" fill="#fff" stroke="#000" stroke-width="1"/><rect x="827.5" y="288.5" width="4" height="18" fill="#fff" stroke="#000" stroke-width="1"/><rect x="843.5" y="286.5" width="4" height="6" fill="#fff" stroke="#000" stroke-width="1"/><rect x="875.5" y="344.5" width="4" height="16" fill="#fff" stroke="#000" stroke-width="1"/><rect x="883.5" y="298.5" width="4" height="30" fill="#fff" stroke="#000" stroke-width="1"/><rect x="891.5" y="286.5" width="4" height="11" fill="#fff" stroke="#000" stroke-width="1"/><rect x="899.5" y="274.5" width="4" height="12" fill="#fff" stroke="#000" stroke-width="1"/><rect x="907.5" y="258.5" width="4" height="16" fill="#fff" stroke="#000" stroke-width="1"/><rect x="923.5" y="258.5" width="4" height="4" fill="#fff" stroke="#000" stroke-width="1"/><rect x="947.5" y="263.5" width="4" height="38" fill="#fff" stroke="#000" stroke-width="1"/><rect x="955.5" y="218.5" width="4" height="46" fill="#fff" stroke="#000" stroke-width="1"/><rect x="971.5" y="209.5" width="4" height="17" fill="#fff" stroke="#000" stroke-width="1"/><rect x="987.5" y="189.5" width="4" height="26" fill="#fff" stroke="#000" stroke-width="1"/><rect x="1027.5" y="214.5" width="4" height="10" fill="#fff" stroke="#000" stroke-width="1"/><path d="M19 138h5v115h-5ZM27 254h5v13h-5ZM35 276h5v45h-5ZM67 233h5v56h-5ZM75 299h5v130h-5ZM91 305h5v8h-5ZM99 311h5v26h-5ZM139 212h5v71h-5ZM147 280h5v165h-5ZM171 338h5v61h-5ZM179 397h5v6h-5ZM187 401h5v76h-5ZM195 491h5v136h-5ZM211 564h5v24h-5ZM235 457h5v21h-5ZM275 347h5v6h-5ZM291 330h5v10h-5ZM299 339h5v17h-5ZM323 332h5v11h-5ZM339 336h5v15h-5ZM347 348h5v5h-5ZM355 387h5v27h-5ZM395 247h5v29h-5ZM403 274h5v41h-5ZM411 313h5v18h-5ZM419 330h5v69h-5ZM427 398h5v31h-5ZM443 400h5v50h-5ZM459 402h5v12h-5ZM467 412h5v26h-5ZM547 237h5v11h-5ZM555 248h5v62h-5ZM571 309h5v37h-5ZM587 308h5v42h-5ZM595 348h5v19h-5ZM659 241h5v27h-5ZM667 268h5v8h-5ZM675 275h5v14h-5ZM699 237h5v11h-5ZM715 230h5v23h-5ZM723 249h5v11h-5ZM747 235h5v31h-5ZM755 264h5v30h-5ZM771 259h5v11h-5ZM779 268h5v60h-5ZM787 328h5v16h-5ZM803 332h5v6h-5ZM835 289h5v3h-5ZM851 287h5v14h-5ZM859 298h5v63h-5ZM915 260h5v3h-5ZM931 258h5v39h-5ZM939 296h5v8h-5ZM963 210h5v17h-5ZM979 209h5v6h-5ZM995 188h5v5h-5ZM1003 191h5v7h-5ZM1011 196h5v19h-5ZM1019 213h5v12h-5ZM1035 214h5v30h-5Z" fill="#000"/></g><path d="M1045.2 249 L1053.5 256.5 L1049.5 256.5 L1049.5 267.5 L1041.5 267.5 L1041.5 256.5 L1037 256.5 Z" fill="#fff" stroke="#ff0000" stroke-width="1.1" shape-rendering="auto"/><rect x="12.5" y="109.5" width="1305" height="566" fill="none" stroke="#000" stroke-width="1"/><text x="1323.4" y="114" font-size="9.6" textLength="32.4" lengthAdjust="spacingAndGlyphs" font-family="Liberation Sans" fill="#000" stroke="#000" stroke-width="0.15" shape-rendering="auto">175.300</text><text x="1323.4" y="147" font-size="9.6" textLength="32.4" lengthAdjust="spacingAndGlyphs" font-family="Liberation Sans" fill="#000" stroke="#000" stroke-width="0.15" shape-rendering="auto">174.620</text><text x="1323.4" y="180" font-size="9.6" textLength="32.4" lengthAdjust="spacingAndGlyphs" font-family="Liberation Sans" fill="#000" stroke="#000" stroke-width="0.15" shape-rendering="auto">173.920</text><text x="1323.4" y="213" font-size="9.6" textLength="32.4" lengthAdjust="spacingAndGlyphs" font-family="Liberation Sans" fill="#000" stroke="#000" stroke-width="0.15" shape-rendering="auto">173.240</text><text x="1323.4" y="279" font-size="9.6" textLength="32.4" lengthAdjust="spacingAndGlyphs" font-family="Liberation Sans" fill="#000" stroke="#000" stroke-width="0.15" shape-rendering="auto">171.880</text><text x="1323.4" y="312" font-size="9.6" textLength="32.4" lengthAdjust="spacingAndGlyphs" font-family="Liberation Sans" fill="#000" stroke="#000" stroke-width="0.15" shape-rendering="auto">171.180</text><text x="1323.4" y="345" font-size="9.6" textLength="32.4" lengthAdjust="spacingAndGlyphs" font-family="Liberation Sans" fill="#000" stroke="#000" stroke-width="0.15" shape-rendering="auto">170.500</text><text x="1323.4" y="378" font-size="9.6" textLength="32.4" lengthAdjust="spacingAndGlyphs" font-family="Liberation Sans" fill="#000" stroke="#000" stroke-width="0.15" shape-rendering="auto">169.820</text><text x="1323.4" y="411" font-size="9.6" textLength="32.4" lengthAdjust="spacingAndGlyphs" font-family="Liberation Sans" fill="#000" stroke="#000" stroke-width="0.15" shape-rendering="auto">169.140</text><text x="1323.4" y="444" font-size="9.6" textLength="32.4" lengthAdjust="spacingAndGlyphs" font-family="Liberation Sans" fill="#000" stroke="#000" stroke-width="0.15" shape-rendering="auto">168.440</text><text x="1323.4" y="477" font-size="9.6" textLength="32.4" lengthAdjust="spacingAndGlyphs" font-family="Liberation Sans" fill="#000" stroke="#000" stroke-width="0.15" shape-rendering="auto">167.760</text><text x="1323.4" y="510" font-size="9.6" textLength="32.4" lengthAdjust="spacingAndGlyphs" font-family="Liberation Sans" fill="#000" stroke="#000" stroke-width="0.15" shape-rendering="auto">167.080</text><text x="1323.4" y="543" font-size="9.6" textLength="32.4" lengthAdjust="spacingAndGlyphs" font-family="Liberation Sans" fill="#000" stroke="#000" stroke-width="0.15" shape-rendering="auto">166.400</text><text x="1323.4" y="576" font-size="9.6" textLength="32.4" lengthAdjust="spacingAndGlyphs" font-family="Liberation Sans" fill="#000" stroke="#000" stroke-width="0.15" shape-rendering="auto">165.700</text><text x="1323.4" y="609" font-size="9.6" textLength="32.4" lengthAdjust="spacingAndGlyphs" font-family="Liberation Sans" fill="#000" stroke="#000" stroke-width="0.15" shape-rendering="auto">165.020</text><text x="1323.4" y="642" font-size="9.6" textLength="32.4" lengthAdjust="spacingAndGlyphs" font-family="Liberation Sans" fill="#000" stroke="#000" stroke-width="0.15" shape-rendering="auto">164.340</text><text x="1323.4" y="675" font-size="9.6" textLength="32.4" lengthAdjust="spacingAndGlyphs" font-family="Liberation Sans" fill="#000" stroke="#000" stroke-width="0.15" shape-rendering="auto">163.660</text><path d="M1317 111.5h3M1317 144.5h3M1317 177.5h3M1317 210.5h3M1317 243.5h3M1317 276.5h3M1317 309.5h3M1317 342.5h3M1317 375.5h3M1317 408.5h3M1317 441.5h3M1317 474.5h3M1317 507.5h3M1317 540.5h3M1317 573.5h3M1317 606.5h3M1317 639.5h3M1317 672.5h3" stroke="#000"/><rect x="1319" y="236" width="42" height="12" fill="#000"/><text x="1323.4" y="246" font-size="9.6" textLength="32.4" lengthAdjust="spacingAndGlyphs" font-family="Liberation Sans" fill="#fff" shape-rendering="auto">172.574</text><text x="12.5" y="688" font-size="9.6" textLength="51.6" lengthAdjust="spacingAndGlyphs" font-family="Liberation Sans" fill="#000" stroke="#000" stroke-width="0.15" shape-rendering="auto">31 Dec 2013</text><text x="76.5" y="688" font-size="9.6" textLength="50.1" lengthAdjust="spacingAndGlyphs" font-family="Liberation Sans" fill="#000" stroke="#000" stroke-width="0.15" shape-rendering="auto">13 Jan 2014</text><text x="140.5" y="688" font-size="9.6" textLength="50.1" lengthAdjust="spacingAndGlyphs" font-family="Liberation Sans" fill="#000" stroke="#000" stroke-width="0.15" shape-rendering="auto">23 Jan 2014</text><text x="204.5" y="688" font-size="9.6" textLength="46.0" lengthAdjust="spacingAndGlyphs" font-family="Liberation Sans" fill="#000" stroke="#000" stroke-width="0.15" shape-rendering="auto">4 Feb 2014</text><text x="268.5" y="688" font-size="9.6" textLength="51.1" lengthAdjust="spacingAndGlyphs" font-family="Liberation Sans" fill="#000" stroke="#000" stroke-width="0.15" shape-rendering="auto">14 Feb 2014</text><text x="332.5" y="688" font-size="9.6" textLength="51.1" lengthAdjust="spacingAndGlyphs" font-family="Liberation Sans" fill="#000" stroke="#000" stroke-width="0.15" shape-rendering="auto">26 Feb 2014</text><text x="396.5" y="688" font-size="9.6" textLength="51.1" lengthAdjust="spacingAndGlyphs" font-family="Liberation Sans" fill="#000" stroke="#000" stroke-width="0.15" shape-rendering="auto">10 Mar 2014</text><text x="460.5" y="688" font-size="9.6" textLength="51.1" lengthAdjust="spacingAndGlyphs" font-family="Liberation Sans" fill="#000" stroke="#000" stroke-width="0.15" shape-rendering="auto">20 Mar 2014</text><text x="524.5" y="688" font-size="9.6" textLength="51.1" lengthAdjust="spacingAndGlyphs" font-family="Liberation Sans" fill="#000" stroke="#000" stroke-width="0.15" shape-rendering="auto">31 Mar 2014</text><text x="588.5" y="688" font-size="9.6" textLength="49.1" lengthAdjust="spacingAndGlyphs" font-family="Liberation Sans" fill="#000" stroke="#000" stroke-width="0.15" shape-rendering="auto">10 Apr 2014</text><text x="652.5" y="688" font-size="9.6" textLength="49.1" lengthAdjust="spacingAndGlyphs" font-family="Liberation Sans" fill="#000" stroke="#000" stroke-width="0.15" shape-rendering="auto">22 Apr 2014</text><text x="716.5" y="688" font-size="9.6" textLength="47.5" lengthAdjust="spacingAndGlyphs" font-family="Liberation Sans" fill="#000" stroke="#000" stroke-width="0.15" shape-rendering="auto">2 May 2014</text><text x="780.5" y="688" font-size="9.6" textLength="52.6" lengthAdjust="spacingAndGlyphs" font-family="Liberation Sans" fill="#000" stroke="#000" stroke-width="0.15" shape-rendering="auto">14 May 2014</text><text x="844.5" y="688" font-size="9.6" textLength="52.6" lengthAdjust="spacingAndGlyphs" font-family="Liberation Sans" fill="#000" stroke="#000" stroke-width="0.15" shape-rendering="auto">26 May 2014</text><text x="908.5" y="688" font-size="9.6" textLength="45.0" lengthAdjust="spacingAndGlyphs" font-family="Liberation Sans" fill="#000" stroke="#000" stroke-width="0.15" shape-rendering="auto">5 Jun 2014</text><text x="972.5" y="688" font-size="9.6" textLength="50.1" lengthAdjust="spacingAndGlyphs" font-family="Liberation Sans" fill="#000" stroke="#000" stroke-width="0.15" shape-rendering="auto">17 Jun 2014</text><text x="1036.5" y="688" font-size="9.6" textLength="50.1" lengthAdjust="spacingAndGlyphs" font-family="Liberation Sans" fill="#000" stroke="#000" stroke-width="0.15" shape-rendering="auto">27 Jun 2014</text><path d="M13.5 675v4M77.5 675v4M141.5 675v4M205.5 675v4M269.5 675v4M333.5 675v4M397.5 675v4M461.5 675v4M525.5 675v4M589.5 675v4M653.5 675v4M717.5 675v4M781.5 675v4M845.5 675v4M909.5 675v4M973.5 675v4M1037.5 675v4" stroke="#000"/></svg><div class="a" style="left:8px;top:693px;width:1354px;height:2px;background:#f0f0f0;"></div><div class="a" style="left:8px;top:695px;width:1354px;height:1px;background:#000;"></div><div class="a" style="left:8px;top:696px;width:1354px;height:18px;background:#f0f0f0;"></div><div class="a" style="left:8px;top:696px;width:2px;height:18px;background:#707070;"></div><div class="a t" style="left:21px;top:700.1px;font-size:10px;color:#7a7a7a;">EURUSD,Daily</div><div class="a t" style="left:110px;top:700.1px;font-size:10px;color:#7a7a7a;">GBPUSD,Daily</div><div class="a t" style="left:199px;top:700.1px;font-size:10px;color:#7a7a7a;">USDJPY,Daily</div><div class="a t" style="left:287px;top:700.1px;font-size:10px;color:#7a7a7a;">EURJPY,Daily</div><div class="a t" style="left:374px;top:700.1px;font-size:10px;color:#7a7a7a;">GBPCHF,Daily</div><div class="a t" style="left:463px;top:700.1px;font-size:10px;color:#7a7a7a;">AUDUSD,Daily</div><div class="a t" style="left:553px;top:700.1px;font-size:10px;color:#7a7a7a;">NZDUSD,Daily</div><div class="a t" style="left:641px;top:700.1px;font-size:10px;color:#7a7a7a;">EURCHF,Daily</div><div class="a t" style="left:729px;top:700.1px;font-size:10px;color:#7a7a7a;">XAUUSD,H4</div><div class="a t" style="left:810px;top:700.1px;font-size:10px;color:#7a7a7a;">EURGBP,H4</div><div class="a t" style="left:975px;top:700.1px;font-size:10px;color:#7a7a7a;">AUDNZD,H4</div><div class="a t" style="left:1055px;top:700.1px;font-size:10px;color:#7a7a7a;">USDCAD,Daily</div><div class="a t" style="left:1145px;top:700.1px;font-size:10px;color:#7a7a7a;">USDCHF,Weekly</div><div class="a" style="left:100px;top:698px;width:1px;height:13px;background:#555;"></div><div class="a" style="left:188px;top:698px;width:1px;height:13px;background:#555;"></div><div class="a" style="left:276px;top:698px;width:1px;height:13px;background:#555;"></div><div class="a" style="left:364px;top:698px;width:1px;height:13px;background:#555;"></div><div class="a" style="left:452px;top:698px;width:1px;height:13px;background:#555;"></div><div class="a" style="left:544px;top:698px;width:1px;height:13px;background:#555;"></div><div class="a" style="left:633px;top:698px;width:1px;height:13px;background:#555;"></div><div class="a" style="left:720px;top:698px;width:1px;height:13px;background:#555;"></div><div class="a" style="left:800px;top:698px;width:1px;height:13px;background:#555;"></div><div class="a" style="left:1044px;top:698px;width:1px;height:13px;background:#555;"></div><div class="a" style="left:1135px;top:698px;width:1px;height:13px;background:#555;"></div><div class="a" style="left:1236px;top:698px;width:1px;height:13px;background:#555;"></div><div class="a" style="left:880px;top:695px;width:82px;height:18px;background:#fff;border:1px solid #000;border-top:none"></div><div class="a t" style="left:890px;top:700.1px;font-size:10px;color:#000;">GBPJPY,Daily</div><svg class="a" style="left:1333px;top:701px" width="24" height="9"><path d="M4.5 1 L1 4.5 L4.5 8 Z M18.5 1 L22 4.5 L18.5 8 Z" fill="#a0a0a0"/></svg><div class="a" style="left:8px;top:714px;width:1354px;height:22px;background:#f0f0f0;"></div><div class="a t" style="left:10px;top:721.8px;font-size:11.4px;color:#111;">Для справки, нажмите F1</div><div class="a t" style="left:642px;top:721.8px;font-size:11.4px;color:#111;">Default</div><div class="a" style="left:636px;top:719px;width:1px;height:16px;background:#b8b8b8;"></div><div class="a" style="left:752px;top:719px;width:1px;height:16px;background:#b8b8b8;"></div><div class="a" style="left:854px;top:719px;width:1px;height:16px;background:#b8b8b8;"></div><div class="a" style="left:925px;top:719px;width:1px;height:16px;background:#b8b8b8;"></div><div class="a" style="left:996px;top:719px;width:1px;height:16px;background:#b8b8b8;"></div><div class="a" style="left:1064px;top:719px;width:1px;height:16px;background:#b8b8b8;"></div><div class="a" style="left:1134px;top:719px;width:1px;height:16px;background:#b8b8b8;"></div><div class="a" style="left:1200px;top:719px;width:1px;height:16px;background:#b8b8b8;"></div><svg class="a" style="left:1206px;top:721px" width="24" height="13"><rect x="0" y="0" width="2" height="12" fill="#3f7a08"/><rect x="0" y="10" width="2" height="2" fill="#9a0a0a"/><rect x="3" y="0" width="2" height="12" fill="#3f7a08"/><rect x="3" y="9" width="2" height="3" fill="#9a0a0a"/><rect x="6" y="0" width="2" height="12" fill="#3f7a08"/><rect x="6" y="8" width="2" height="4" fill="#9a0a0a"/><rect x="9" y="0" width="2" height="12" fill="#3f7a08"/><rect x="9" y="7" width="2" height="5" fill="#9a0a0a"/><rect x="12" y="0" width="2" height="12" fill="#3f7a08"/><rect x="12" y="6" width="2" height="6" fill="#9a0a0a"/><rect x="15" y="0" width="2" height="12" fill="#3f7a08"/><rect x="15" y="5" width="2" height="7" fill="#9a0a0a"/><rect x="18" y="0" width="2" height="12" fill="#3f7a08"/><rect x="18" y="4" width="2" height="8" fill="#9a0a0a"/><rect x="21" y="0" width="2" height="12" fill="#3f7a08"/><rect x="21" y="3" width="2" height="9" fill="#9a0a0a"/></svg><div class="a t" style="left:1269.5px;top:721.8px;font-size:11.4px;color:#111;">78/2 kb</div><svg class="a" style="left:1347px;top:721px" width="15" height="15"><path d="M15 0 L0 15 M15 3 L3 15 M15 6 L6 15 M15 9 L9 15 M15 12 L12 15" stroke="#a8a8a8" stroke-width="1.1"/></svg><div class="a" style="left:60px;top:736px;width:56px;height:8px;background:#a86a70;border:1px solid #c09096;border-bottom:none"></div><svg class="a" style="left:0px;top:736px" width="400" height="8"><path d="M33 8 L45 5.5 L46 8 Z" fill="#e8e8e8"/><ellipse cx="89" cy="12" rx="8" ry="6.5" fill="#e03030"/><rect x="136" y="5" width="30" height="3" fill="#109010"/><path d="M198 8 L215 4.5 L216 8 Z" fill="#2f5fb0"/></svg><div class="a" style="left:246px;top:736px;width:55px;height:8px;background:#a86a70;border:1px solid #c09096;border-bottom:none"></div><svg class="a" style="left:246px;top:736px" width="60" height="8"><ellipse cx="28" cy="9" rx="9" ry="5.5" fill="#20a0f0"/></svg><div class="a" style="left:308px;top:736px;width:56px;height:8px;background:#b07a80;border:1px solid #d0a8ac;border-bottom:none"></div><svg class="a" style="left:308px;top:736px" width="60" height="8"><ellipse cx="29" cy="10" rx="10" ry="6.5" fill="#f09828"/></svg>
</body></html>
